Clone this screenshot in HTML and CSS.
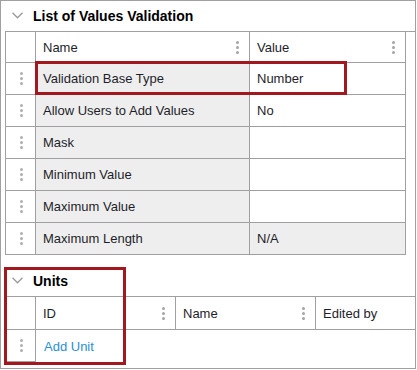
FILE: index.html
```html
<!DOCTYPE html>
<html lang="en">
<head>
    <meta charset="UTF-8">
    <meta name="viewport" content="width=device-width, initial-scale=1.0">
    <title>List of Values Validation</title>
    <link rel="stylesheet" href="styles.css">
</head>
<body>
    <div class="panel">
        <div class="section">
            <div class="section-head">
                <svg class="chevron" width="11" height="7" viewBox="0 0 11 7"><polyline points="0.5,0.8 5.5,5.8 10.5,0.8" fill="none" stroke="#9a9a9a" stroke-width="1.3"/></svg>
                <span>List of Values Validation</span>
            </div>
            <div class="grid props">
                <div class="cell grip"></div>
                <div class="cell head">Name <span class="kebab"><i></i><i></i><i></i></span></div>
                <div class="cell head">Value <span class="kebab"><i></i><i></i><i></i></span></div>

                <div class="cell grip"><span class="dots"><i></i><i></i><i></i></span></div>
                <div class="cell name">Validation Base Type</div>
                <div class="cell">Number</div>

                <div class="cell grip"><span class="dots"><i></i><i></i><i></i></span></div>
                <div class="cell name">Allow Users to Add Values</div>
                <div class="cell">No</div>

                <div class="cell grip"><span class="dots"><i></i><i></i><i></i></span></div>
                <div class="cell name">Mask</div>
                <div class="cell"></div>

                <div class="cell grip"><span class="dots"><i></i><i></i><i></i></span></div>
                <div class="cell name">Minimum Value</div>
                <div class="cell"></div>

                <div class="cell grip"><span class="dots"><i></i><i></i><i></i></span></div>
                <div class="cell name">Maximum Value</div>
                <div class="cell"></div>

                <div class="cell grip"><span class="dots"><i></i><i></i><i></i></span></div>
                <div class="cell name">Maximum Length</div>
                <div class="cell name">N/A</div>
            </div>
        </div>

        <div class="section units">
            <div class="section-head">
                <svg class="chevron" width="11" height="7" viewBox="0 0 11 7"><polyline points="0.5,0.8 5.5,5.8 10.5,0.8" fill="none" stroke="#9a9a9a" stroke-width="1.3"/></svg>
                <span>Units</span>
            </div>
            <div class="grid unit-grid">
                <div class="cell grip"></div>
                <div class="cell head">ID <span class="kebab"><i></i><i></i><i></i></span></div>
                <div class="cell head">Name <span class="kebab"><i></i><i></i><i></i></span></div>
                <div class="cell head last">Edited by</div>

                <div class="cell grip add-grip"><span class="dots"><i></i><i></i><i></i></span></div>
                <div class="cell add"><a href="#">Add Unit</a></div>
                <div class="cell add"></div>
                <div class="cell add"></div>
            </div>
        </div>

        <div class="callout callout-base"></div>
        <div class="callout callout-units"></div>
    </div>
</body>
</html>
```

FILE: styles.css
```css
body {
    margin: 0;
    font-family: 'Liberation Sans', Arial, sans-serif;
    font-size: 13px;
    color: #1e1e2a;
    background-color: #ffffff;
}

.panel {
    position: relative;
    box-sizing: border-box;
    width: 416px;
    height: 369px;
    border: 1px solid #a0a0a0;
}

.section-head {
    display: flex;
    align-items: center;
    height: 30px;
    padding-left: 11px;
    font-size: 14px;
    font-weight: bold;
    color: #000;
}

.chevron {
    margin-right: 10px;
    margin-top: -1px;
}

.units {
    margin-top: 11px;
}

.grid {
    display: grid;
    margin-left: 4px;
    border-top: 1px solid #a0a0a0;
    border-left: 1px solid #a0a0a0;
}

.props {
    grid-template-columns: 30px 214px 156px;
    grid-auto-rows: 32px;
    grid-template-rows: 31px;
}

.unit-grid {
    grid-template-columns: 30px 140px 140px 99px;
    grid-template-rows: 33px 32px;
}

.cell {
    box-sizing: border-box;
    display: flex;
    align-items: center;
    padding-left: 7px;
    border-right: 1px solid #a0a0a0;
    border-bottom: 1px solid #a0a0a0;
    background-color: #ffffff;
}

.cell.name {
    background-color: #eeeeee;
}

.cell.head {
    justify-content: space-between;
    padding-right: 10px;
}

.cell.last {
    border-right: none;
}

.cell.grip {
    justify-content: center;
    padding-left: 0;
}

.cell.add {
    border-right: none;
    border-bottom: none;
}

.cell.add a {
    color: #2b8fd8;
    text-decoration: none;
    padding-left: 1px;
}

.kebab {
    display: flex;
    flex-direction: column;
    gap: 2px;
}

.kebab i {
    display: block;
    width: 3px;
    height: 3px;
    border-radius: 50%;
    background-color: #a4a4a4;
}

.dots {
    display: flex;
    flex-direction: column;
    gap: 2px;
    margin-left: 1px;
}

.dots i {
    display: block;
    width: 3px;
    height: 3px;
    border-radius: 50%;
    background-color: #b0b0b0;
}

.callout {
    position: absolute;
    box-sizing: border-box;
    border: 3px solid #a3171f;
}

.callout-base {
    left: 34px;
    top: 60px;
    width: 312px;
    height: 34px;
}

.callout-units {
    left: 3px;
    top: 266px;
    width: 122px;
    height: 98px;
}
```
